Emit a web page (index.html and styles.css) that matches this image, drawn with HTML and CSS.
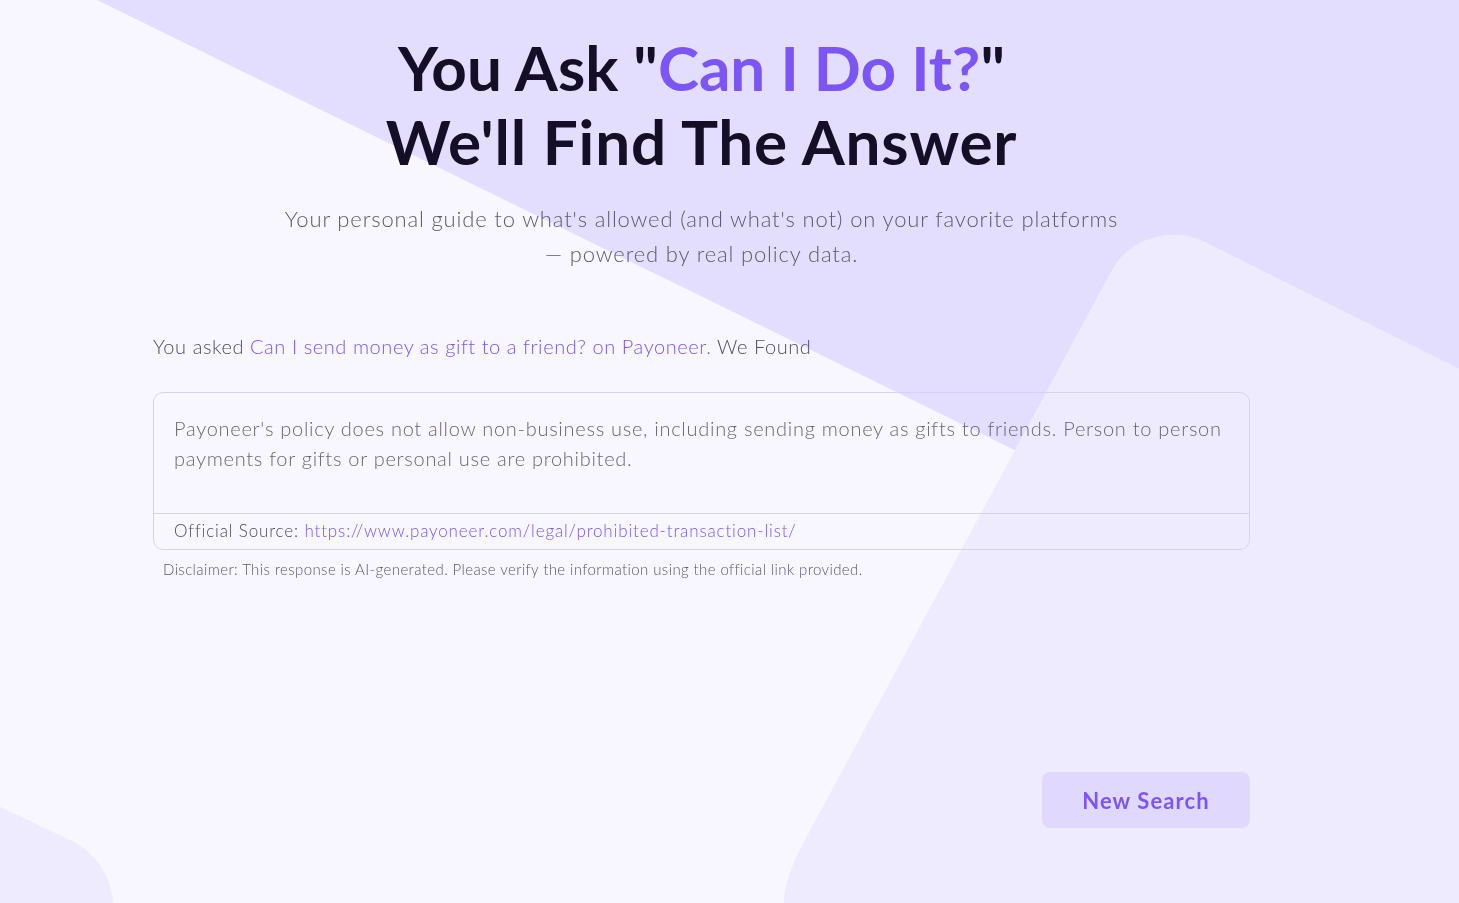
FILE: index.html
```html
<!DOCTYPE html>
<html lang="en">
<head>
    <meta charset="UTF-8">
    <title>Can I Do It? - Result</title>
    <link rel="stylesheet" href="styles.css">
</head>
<body>

    <!-- Background shapes -->
    <svg class="bg-shapes" width="1459" height="903" viewBox="0 0 1459 903" preserveAspectRatio="none" aria-hidden="true">
        <polygon class="shape-dark" points="97,0 1500,0 1500,688" />
        <path class="shape-light" d="M1112,270 C1130,238 1172,225 1207,243 L1500,389 L1500,960 L784,960 L784,905 C784,885 790,868 805,840 Z" />
        <path class="shape-light" d="M-10,802 L70,840 C95,852 112,875 113,905 L113,960 L-10,960 Z" />
    </svg>

    <div class="page">

        <!-- Hero -->
        <div class="hero">
            <h1>You Ask "<span class="accent">Can I Do It?</span>"<br><span class="line-two">We'll Find The Answer</span></h1>
            <p class="subtitle">Your personal guide to what's allowed (and what's not) on your favorite platforms<br>— powered by real policy data.</p>
        </div>

        <!-- Result -->
        <div class="result">
            <p class="asked">You asked <span class="accent">Can I send money as gift to a friend? on Payoneer.</span> We Found</p>

            <div class="answer-card">
                <div class="answer-text">
                    Payoneer's policy does not allow non-business use, including sending money as gifts to friends. Person to person payments for gifts or personal use are prohibited.
                </div>
                <div class="answer-source">
                    Official Source: <a href="https://www.payoneer.com/legal/prohibited-transaction-list/">https://www.payoneer.com/legal/prohibited-transaction-list/</a>
                </div>
            </div>

            <p class="disclaimer">Disclaimer: This response is AI-generated. Please verify the information using the official link provided.</p>
        </div>

        <div class="actions">
            <button class="new-search">New Search</button>
        </div>

    </div>

</body>
</html>
```

FILE: styles.css
```css
body {
    font-family: Lato, "Noto Sans", sans-serif;
    background: #f8f6ff;
    margin: 0;
    padding: 0;
    min-height: 903px;
    overflow: hidden;
}

/* Background */
.bg-shapes {
    position: fixed;
    top: 0;
    left: 0;
    width: 100%;
    height: 100%;
    z-index: 0;
}

    .bg-shapes .shape-dark {
        fill: #e3ddfe;
    }

    .bg-shapes .shape-light {
        fill: #efebff;
    }

.page {
    position: relative;
    z-index: 1;
    width: 1097px;
    margin: 0 0 0 153px;
}

.accent {
    color: #7b56f5;
}

/* Hero */
.hero {
    text-align: center;
    padding-top: 30px;
}

    .hero h1 {
        font-size: 62px;
        line-height: 74px;
        font-weight: 700;
        color: #140f27;
        margin: 0;
    }

        .hero h1 .line-two {
            letter-spacing: 0.8px;
        }

    .hero .subtitle {
        font-size: 22px;
        line-height: 35px;
        font-weight: 300;
        letter-spacing: 0.85px;
        color: #5f5a6e;
        margin: 23px 0 0;
    }

/* Result */
.result {
    margin-top: 63px;
}

    .result .asked {
        font-size: 20px;
        font-weight: 300;
        letter-spacing: 0.57px;
        color: #534e66;
        margin: 0 0 34px;
    }

.answer-card {
    border: 1px solid #d8d0fb;
    border-radius: 10px;
}

    .answer-card .answer-text {
        min-height: 80px;
        padding: 20px 20px 20px;
        font-size: 20px;
        line-height: 30px;
        font-weight: 300;
        letter-spacing: 0.72px;
        color: #6b6677;
    }

    .answer-card .answer-source {
        border-top: 1px solid #d8d0fb;
        padding: 6px 20px 7px;
        font-size: 17px;
        line-height: 22px;
        font-weight: 300;
        letter-spacing: 0.85px;
        color: #4f4a5f;
    }

        .answer-card .answer-source a {
            color: #7b56f5;
            text-decoration: none;
        }

.disclaimer {
    font-size: 15px;
    font-weight: 300;
    letter-spacing: 0.4px;
    color: #5d5870;
    margin: 10px 0 0 10px;
}

/* Actions */
.actions {
    display: flex;
    justify-content: flex-end;
    margin-top: 194px;
}

.new-search {
    width: 208px;
    height: 56px;
    background: #e0d9fd;
    color: #7b56f5;
    border: none;
    border-radius: 8px;
    font-family: inherit;
    font-size: 22px;
    font-weight: 700;
    letter-spacing: 1.1px;
    cursor: pointer;
}
```
